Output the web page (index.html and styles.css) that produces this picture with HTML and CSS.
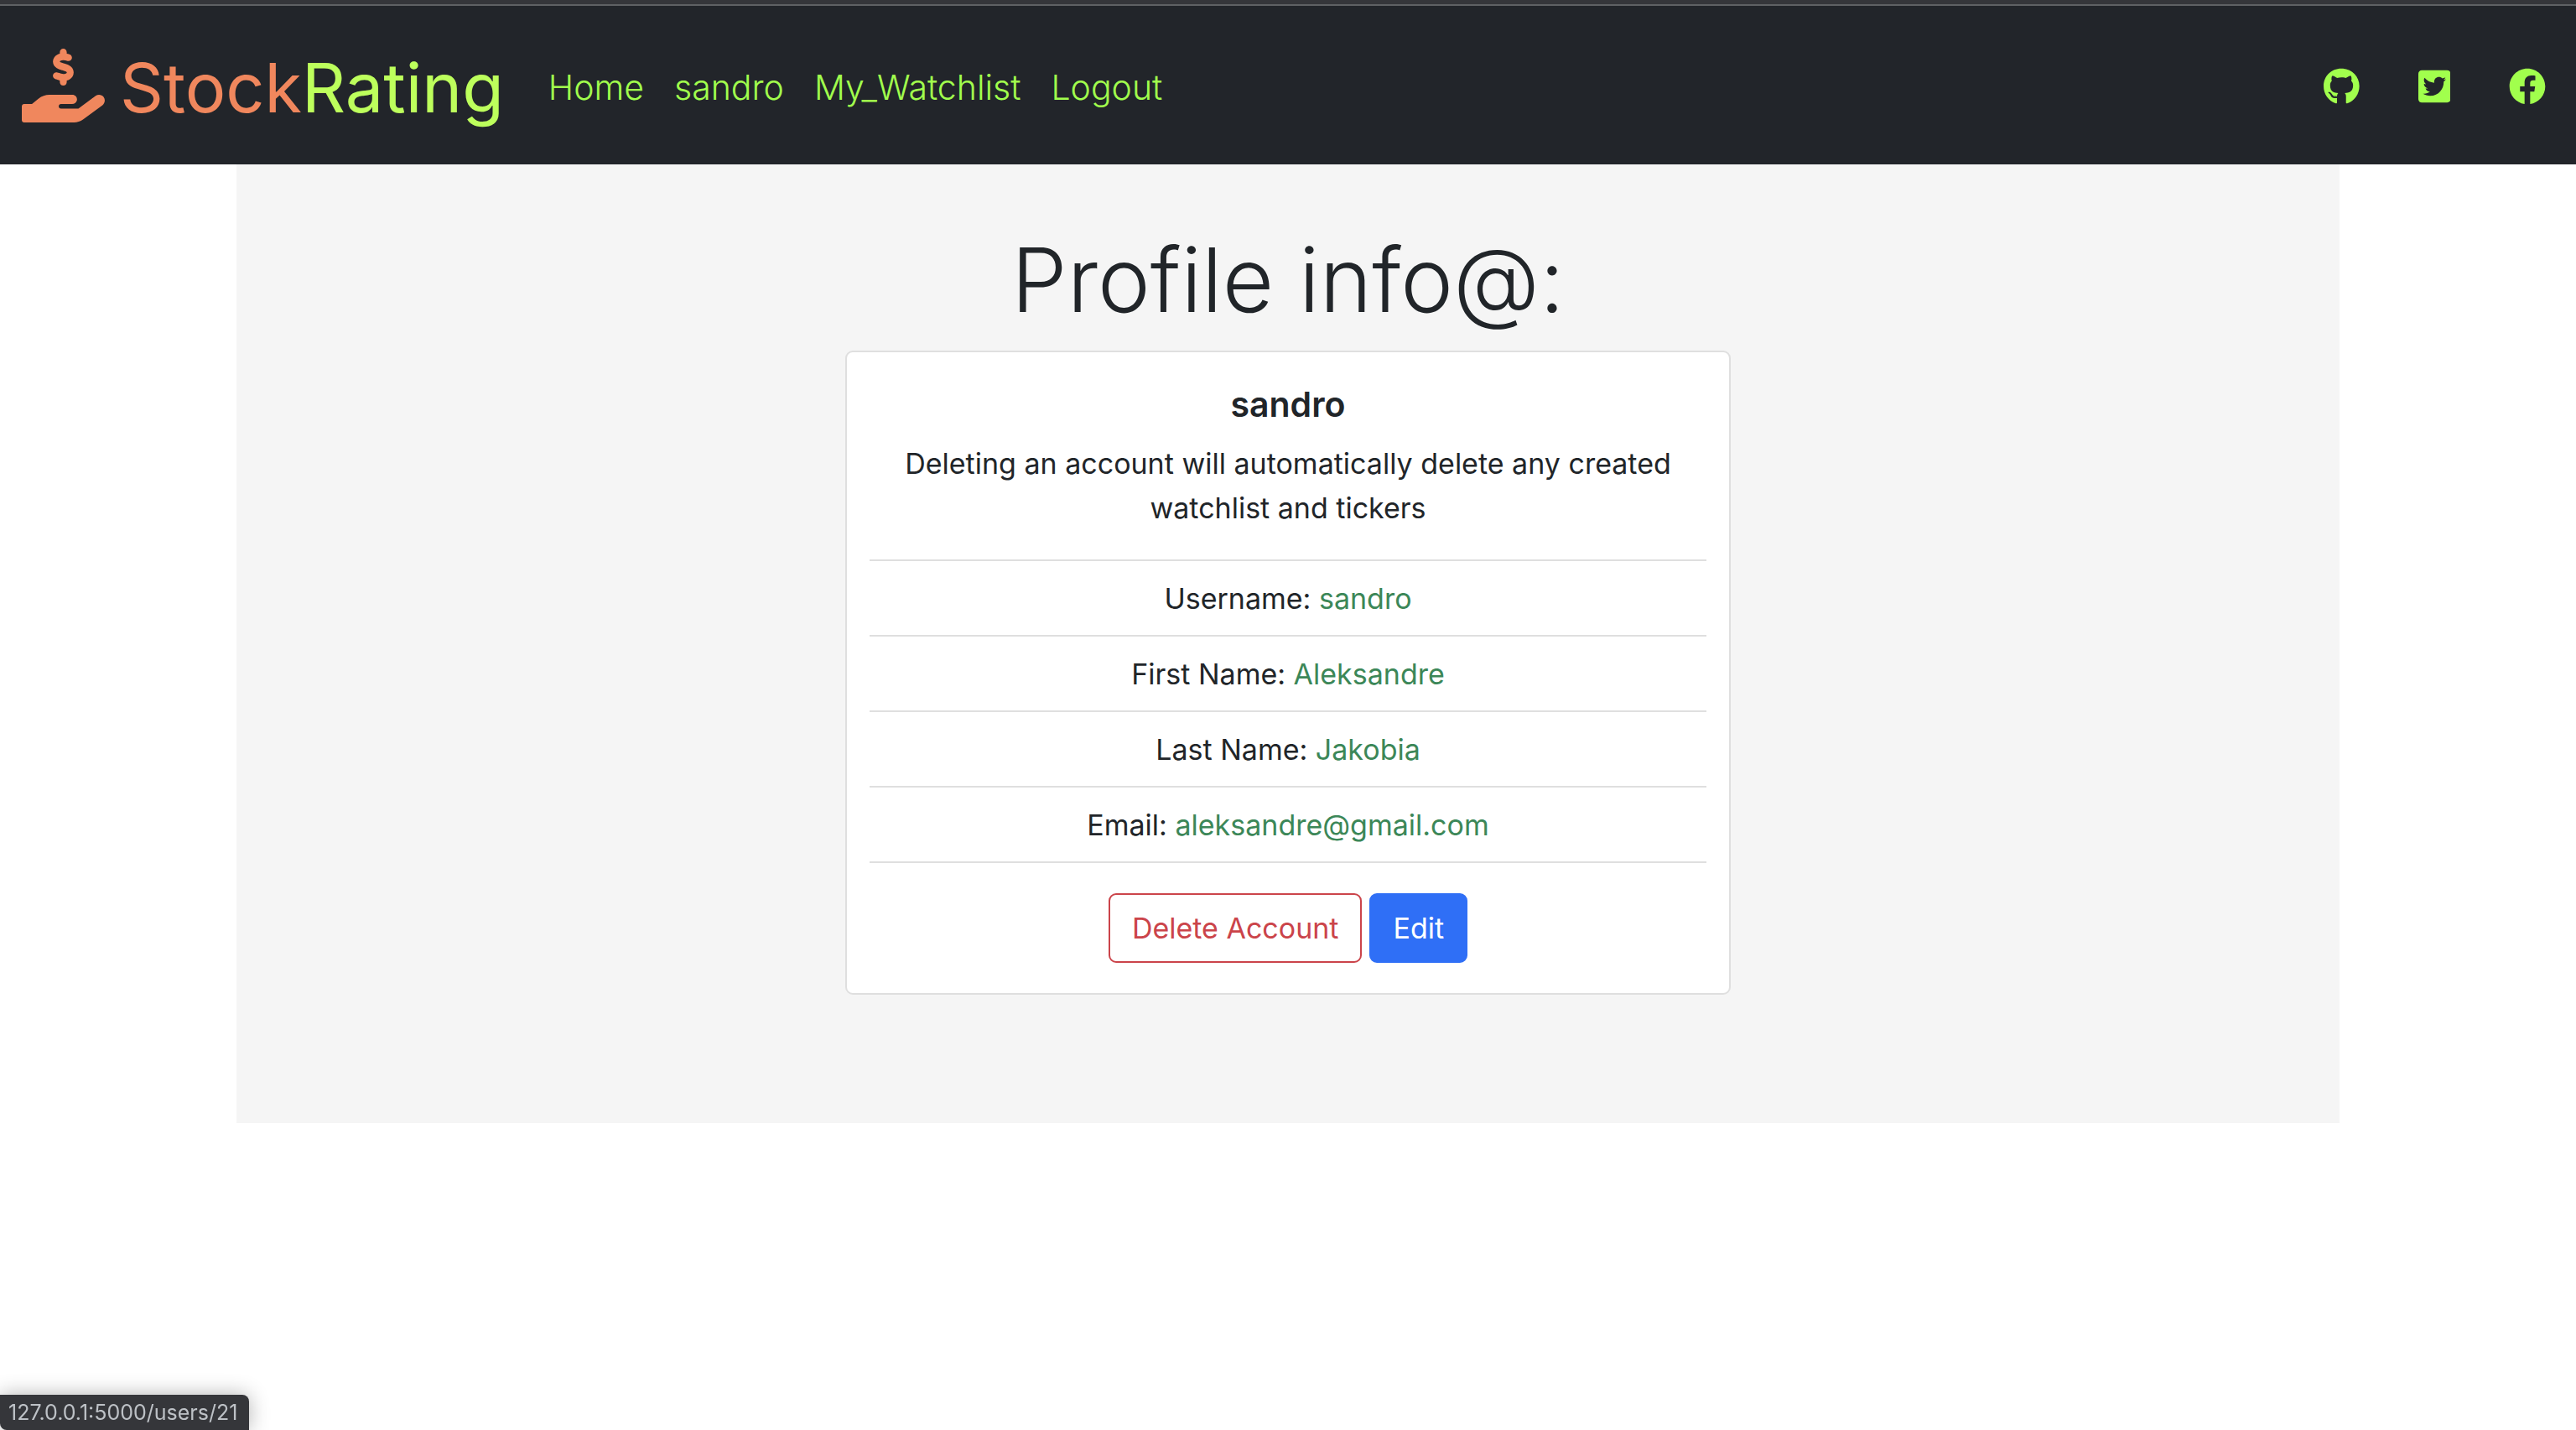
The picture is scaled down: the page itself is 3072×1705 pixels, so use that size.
FILE: index.html
```html
<!DOCTYPE html>
<html lang="en">
<head>
<meta charset="utf-8">
<meta name="viewport" content="width=device-width, initial-scale=1">
<title>StockRating</title>
<link rel="stylesheet" href="styles.css">
</head>
<body>
<header class="navbar">
  <a class="brand" href="#">
    <svg class="brand-icon" viewBox="0 0 576 512" aria-hidden="true"><path d="M312 24V34.500c6.400 1.200 12.600 2.700 18.200 4.200c12.800 3.400 20.400 16.600 17 29.400s-16.600 20.400-29.400 17c-10.900-2.900-21.100-4.900-30.200-5c-7.300-.1-14.700 1.700-19.400 4.400c-2.100 1.300-3.100 2.400-3.500 3c-.3 .5-.7 1.200-.7 2.800c0 .3 0 .5 0 .6c.2 .2 .9 1.200 3.300 2.600c5.800 3.500 14.400 6.200 27.400 10.100l.9 .3c11.100 3.300 25.900 7.800 37.900 15.300c13.700 8.600 26.100 22.900 26.400 44.900c.3 22.500-11.400 38.900-26.700 48.500c-6.700 4.100-13.900 7-21.300 8.800V232c0 13.300-10.700 24-24 24s-24-10.700-24-24V220.600c-9.500-2.300-18.200-5.300-25.600-7.800c-2.100-.7-4.100-1.400-6-2c-12.600-4.200-19.400-17.800-15.200-30.400s17.800-19.400 30.400-15.200c2.600 .9 5 1.700 7.300 2.500c13.600 4.600 23.400 7.900 33.900 8.300c8 .3 15.100-1.600 19.200-4.100c1.900-1.200 2.800-2.200 3.200-2.900c.4-.6 .9-1.800 .8-4.100l0-.2c0-1 0-2.100-4-4.600c-5.700-3.600-14.300-6.400-27.100-10.300l-1.900-.6c-10.800-3.200-25-7.500-36.400-14.400c-13.500-8.100-26.500-22-26.600-44.100c-.1-22.900 12.900-38.600 27.700-47.400c6.400-3.800 13.300-6.400 20.200-8.200V24c0-13.300 10.700-24 24-24s24 10.700 24 24zM559.700 392.200l-135.100 99.510C406.900 504.800 385 512 362.100 512H16c-8.800 0-16-7.200-16-16v-96c0-8.700 7.200-16 16-16h54.500l46.500-37.700c21-17 47.100-26.300 74.100-26.300h160c19.500 0 34.900 17.400 31.600 37.400c-2.600 15.700-17.400 26.600-33.400 26.600H272c-8.800 0-16 7.200-16 16s7.200 16 16 16h120.600l119.700-88.200c17.800-13.200 42.800-9.300 55.900 8.500c12.700 17.800 8.900 42.800-8.500 55.900z"/></svg>
    <span class="brand-name"><span class="brand-first">Stock</span>Rating</span>
  </a>
  <nav class="nav-links">
    <a href="#">Home</a>
    <a href="#">sandro</a>
    <a href="#">My_Watchlist</a>
    <a href="#">Logout</a>
  </nav>
  <div class="social">
    <a href="#" aria-label="GitHub"><svg viewBox="0 0 496 512"><path d="M165.900 397.400c0 2-2.300 3.600-5.200 3.600-3.300.3-5.600-1.300-5.600-3.600 0-2 2.300-3.600 5.200-3.600 3-.3 5.600 1.300 5.600 3.600zm-31.100-4.500c-.7 2 1.300 4.300 4.300 4.900 2.600 1 5.600 0 6.200-2s-1.300-4.300-4.300-5.200c-2.600-.7-5.500.3-6.200 2.300zm44.200-1.700c-2.900.7-4.900 2.600-4.600 4.900.3 2 2.900 3.300 5.900 2.600 2.900-.7 4.900-2.600 4.600-4.600-.3-1.900-3-3.200-5.900-2.900zM244.800 8C106.100 8 0 113.300 0 252c0 110.900 69.800 205.800 169.500 239.200 12.800 2.300 17.300-5.600 17.300-12.100 0-6.200-.3-40.400-.3-61.400 0 0-70 15-84.700-29.800 0 0-11.400-29.100-27.800-36.600 0 0-22.900-15.700 1.600-15.400 0 0 24.900 2 38.600 25.800 21.900 38.600 58.600 27.500 72.900 20.900 2.300-16 8.800-27.100 16-33.700-55.900-6.200-112.300-14.300-112.300-110.500 0-27.500 7.600-41.300 23.600-58.900-2.600-6.500-11.100-33.300 2.600-67.900 20.900-6.500 69 27 69 27 20-5.600 41.500-8.500 62.800-8.500s42.800 2.900 62.800 8.500c0 0 48.100-33.600 69-27 13.700 34.700 5.200 61.400 2.600 67.900 16 17.700 25.800 31.500 25.800 58.900 0 96.500-58.900 104.200-114.800 110.500 9.200 7.900 17 22.900 17 46.400 0 33.700-.3 75.400-.3 83.600 0 6.500 4.600 14.400 17.300 12.100C428.200 457.800 496 362.900 496 252 496 113.300 383.500 8 244.800 8z"/></svg></a>
    <a href="#" aria-label="Twitter"><svg viewBox="0 0 448 512"><path d="M400 32H48C21.500 32 0 53.500 0 80v352c0 26.500 21.500 48 48 48h352c26.500 0 48-21.500 48-48V80c0-26.500-21.500-48-48-48zm-48.900 158.800c.2 2.800.2 5.700.2 8.500 0 86.700-66 186.600-186.600 186.600-37.200 0-71.700-10.800-100.700-29.400 5.300.6 10.400.8 15.800.8 30.700 0 58.900-10.400 81.400-28-28.800-.6-53-19.500-61.300-45.500 10.100 1.500 19.200 1.500 29.600-1.200-30-6.100-52.500-32.500-52.500-64.400v-.8c8.700 4.900 18.900 7.900 29.600 8.300a65.447 65.447 0 0 1-29.200-54.600c0-12.200 3.200-23.400 8.900-33.100 32.300 39.800 80.800 65.800 135.200 68.600-9.300-44.500 24-80.600 64-80.600 18.900 0 35.900 7.900 47.900 20.700 14.800-2.800 29-8.300 41.600-15.800-4.900 15.200-15.200 28-28.800 36.100 13.200-1.400 26-5.100 37.800-10.200-8.900 13.100-20.100 24.700-32.900 34z"/></svg></a>
    <a href="#" aria-label="Facebook"><svg viewBox="0 0 512 512"><path d="M504 256C504 119 393 8 256 8S8 119 8 256c0 123.780 90.690 226.380 209.250 245V327.690h-63V256h63v-54.640c0-62.150 37-96.480 93.670-96.480 27.140 0 55.520 4.840 55.520 4.840v61h-31.280c-30.800 0-40.410 19.120-40.410 38.730V256h68.780l-11 71.690h-57.780V501C413.310 482.380 504 379.780 504 256z"/></svg></a>
  </div>
</header>
<main class="container">
  <h1 class="title">Profile info@:</h1>
  <section class="card">
    <h2 class="card-title">sandro</h2>
    <p class="card-text">Deleting an account will automatically delete any created watchlist and tickers</p>
    <ul class="details">
      <li>Username: <span class="value">sandro</span></li>
      <li>First Name: <span class="value">Aleksandre</span></li>
      <li>Last Name: <span class="value">Jakobia</span></li>
      <li>Email: <span class="value">aleksandre@gmail.com</span></li>
    </ul>
    <div class="actions">
      <button class="btn btn-outline-danger" type="button">Delete Account</button>
      <a class="btn btn-primary" href="#">Edit</a>
    </div>
  </section>
</main>
<div class="status">127.0.0.1:5000/users/21</div>
</body>
</html>
```
FILE: styles.css
```css
* { box-sizing: border-box; }

body {
  margin: 0;
  background: #fff;
  color: #212529;
  font-family: Inter, "Liberation Sans", sans-serif;
  font-size: 34px;
  line-height: 53px;
  border-top: 5px solid #35363a;
}

a { text-decoration: none; }

.navbar {
  display: flex;
  align-items: center;
  height: 191px;
  padding: 0 36px 0 26px;
  border-top: 2px solid #5f6164;
  background: #22252a;
}

.brand {
  display: flex;
  align-items: center;
  gap: 18px;
  color: #bdff5c;
}

.brand-icon {
  width: 99px;
  height: 88px;
  fill: #f0875d;
}

.brand-name {
  padding-top: 6px;
  font-size: 81px;
  line-height: 120px;
}

.brand-first { color: #f0875d; }

.nav-links {
  display: flex;
  gap: 36px;
  margin-left: 53px;
  padding-top: 6px;
  font-size: 41px;
  font-weight: 300;
}

.nav-links a { color: #a1ff4d; }

.social {
  display: flex;
  gap: 70px;
  margin-left: auto;
  padding-top: 2px;
}

.social a { display: flex; }

.social svg {
  height: 44px;
  fill: #a1ff4d;
}

.container {
  max-width: 2508px;
  margin: 0 auto;
  padding: 64px 35px 153px;
  background: #f5f5f5;
  text-align: center;
}

.title {
  margin: 0 0 10px;
  font-size: 106px;
  font-weight: 300;
  line-height: 148px;
}

.card {
  max-width: 1056px;
  margin: 0 auto;
  padding: 36px 27px;
  border: 2px solid #dfdfdf;
  border-radius: 9px;
  background: #fff;
}

.card-title {
  margin: 0 0 17px;
  font-size: 41px;
  font-weight: 600;
  line-height: 53px;
}

.card-text { margin: 0 0 35px; }

.details {
  margin: 0 0 36px;
  padding: 0;
  border-top: 2px solid #dfdfdf;
  list-style: none;
}

.details li {
  padding: 18px 35px 17px;
  border-bottom: 2px solid #dfdfdf;
}

.value { color: #3c8758; }

.actions {
  display: flex;
  justify-content: center;
  gap: 9px;
}

.btn {
  padding: 13px 26px;
  border: 2px solid;
  border-radius: 9px;
  font: inherit;
}

.btn-outline-danger {
  border-color: #cb444a;
  background: #fff;
  color: #cb444a;
}

.btn-primary {
  border-color: #2f6ff6;
  background: #2f6ff6;
  color: #fff;
}

.status {
  position: fixed;
  bottom: 0;
  left: 0;
  padding: 0 14px 0 10px;
  border-radius: 0 8px 0 8px;
  background: #35363a;
  box-shadow: 0 0 24px rgba(0, 0, 0, 0.3);
  color: #bdc1c6;
  font-size: 25px;
  line-height: 42px;
}
```
